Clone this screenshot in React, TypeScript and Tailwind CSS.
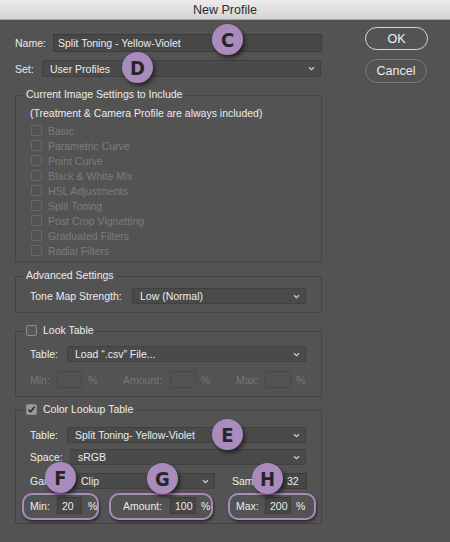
import type { ReactNode } from "react";

const Chevron = () => (
  <svg width="7" height="5" viewBox="0 0 7 5" className="shrink-0">
    <path d="M1 1.2 L3.5 3.6 L6 1.2" fill="none" stroke="#d0d0d0" strokeWidth="1.2" />
  </svg>
);

const Dropdown = ({ value, className = "" }: { value: string; className?: string }) => (
  <div
    className={`flex items-center justify-between h-[16px] bg-[#4a4a4a] border border-[#404040] rounded-[2px] pl-[7px] pr-[5px] text-[#ececec] ${className}`}
  >
    <span>{value}</span>
    <Chevron />
  </div>
);

const Box = ({ legend, children, className = "" }: { legend: ReactNode; children: ReactNode; className?: string }) => (
  <div className={`border border-[#444444] ${className}`}>
    <div className="-mt-[9px] ml-[7px] px-[3px] bg-[#535353] w-fit h-[14px] leading-[14px] flex items-center gap-[6px] text-[#ececec]">
      {legend}
    </div>
    {children}
  </div>
);

const CheckBox = ({ checked = false, disabled = false }: { checked?: boolean; disabled?: boolean }) => (
  <div
    className={`w-[11px] h-[11px] rounded-[2px] border flex items-center justify-center shrink-0 ${
      checked
        ? "bg-[#9a9a9a] border-[#8a8a8a]"
        : disabled
        ? "bg-[#535353] border-[#686868]"
        : "bg-[#585858] border-[#8e8e8e]"
    }`}
  >
    {checked && (
      <svg width="9" height="9" viewBox="0 0 9 9">
        <path d="M1.5 4.6 L3.6 6.8 L7.6 1.8" fill="none" stroke="#2b2b2b" strokeWidth="1.6" />
      </svg>
    )}
  </div>
);

const NumBox = ({ value = "", disabled = false, w = "w-[26px]" }: { value?: string; disabled?: boolean; w?: string }) => (
  <div
    className={`${w} h-[17px] border flex items-center pl-[4px] ${
      disabled ? "bg-[#535353] border-[#484848]" : "bg-[#464646] border-[#3c3c3c] text-[#ececec]"
    }`}
  >
    {value}
  </div>
);

const Marker = ({ letter, x, y }: { letter: string; x: number; y: number }) => (
  <div
    className="absolute w-[31px] h-[31px] rounded-full bg-[#a98bbd] flex items-center justify-center shadow-[2px_3px_4px_rgba(0,0,0,0.55)] text-[#262626] font-bold text-[20px] leading-none"
    style={{ left: x - 15, top: y - 15, fontFamily: '"DejaVu Sans Condensed", "DejaVu Sans", sans-serif' }}
  >
    {letter}
  </div>
);

const Ring = ({ x, w }: { x: number; w: number }) => (
  <div
    className="absolute top-[493px] h-[27px] rounded-[10px] border-2 border-[#a98bbd] shadow-[1px_2px_3px_rgba(0,0,0,0.5)]"
    style={{ left: x, width: w }}
  />
);

const includeItems = [
  "Basic",
  "Parametric Curve",
  "Point Curve",
  "Black & White Mix",
  "HSL Adjustments",
  "Split Toning",
  "Post Crop Vignetting",
  "Graduated Filters",
  "Radial Filters",
];

export default function App() {
  return (
    <div
      className="relative w-[450px] h-[542px] overflow-hidden bg-[#535353] text-[10.5px] leading-[14px] text-[#ececec]"
      style={{ fontFamily: '"Liberation Sans", Arial, sans-serif' }}
    >
      {/* title bar */}
      <div className="h-[20px] bg-gradient-to-b from-[#ececec] to-[#d4d4d4] border-b border-[#a9a9a9] flex items-center justify-center text-[12.5px] text-[#2e2e2e]">
        New Profile
      </div>

      <div className="flex">
        {/* left column */}
        <div className="pl-[15px] w-[322px] shrink-0">
          <div className="mt-[14px] h-[18px] flex items-center">
            <span className="w-[38px]">Name:</span>
            <div className="w-[269px] h-[18px] bg-[#474747] border border-[#3c3c3c] flex items-center pl-[4px]">
              Split Toning - Yellow-Violet
            </div>
          </div>
          <div className="mt-[8px] h-[17px] flex items-center">
            <span className="w-[27px]">Set:</span>
            <Dropdown value="User Profiles" className="w-[279px] h-[17px]" />
          </div>

          <Box legend="Current Image Settings to Include" className="mt-[18px] pb-[3px]">
            <div className="mt-[5px] pl-[14px]">(Treatment &amp; Camera Profile are always included)</div>
            <div className="mt-[3px] pl-[15px]">
              {includeItems.map((item) => (
                <div key={item} className="h-[15px] flex items-center gap-[6px] text-[#7c7c7c]">
                  <CheckBox disabled />
                  <span>{item}</span>
                </div>
              ))}
            </div>
          </Box>

          <Box legend="Advanced Settings" className="mt-[14px] pb-[8px]">
            <div className="mt-[6px] pl-[14px] flex items-center">
              <span className="w-[102px]">Tone Map Strength:</span>
              <Dropdown value="Low (Normal)" className="w-[174px]" />
            </div>
          </Box>

          <Box
            legend={
              <>
                <CheckBox />
                <span>Look Table</span>
              </>
            }
            className="mt-[18px] pb-[8px]"
          >
            <div className="mt-[9px] pl-[14px] flex items-center">
              <span className="w-[37px]">Table:</span>
              <Dropdown value={"Load \u201c.csv\u201d File..."} className="w-[239px]" />
            </div>
            <div className="mt-[9px] pl-[14px] flex items-center text-[#777777]">
              <div className="w-[93px] flex items-center">
                <span className="w-[27px]">Min:</span>
                <NumBox disabled w="w-[25px]" />
                <span className="pl-[6px]">%</span>
              </div>
              <div className="w-[113px] flex items-center">
                <span className="w-[47px]">Amount:</span>
                <NumBox disabled />
                <span className="pl-[5px]">%</span>
              </div>
              <div className="flex items-center">
                <span className="w-[29px]">Max:</span>
                <NumBox disabled />
                <span className="pl-[5px]">%</span>
              </div>
            </div>
          </Box>

          <Box
            legend={
              <>
                <CheckBox checked />
                <span>Color Lookup Table</span>
              </>
            }
            className="mt-[13px] pb-[9px]"
          >
            <div className="mt-[11px] pl-[14px] flex items-center">
              <span className="w-[37px]">Table:</span>
              <Dropdown value="Split Toning- Yellow-Violet" className="w-[239px]" />
            </div>
            <div className="mt-[6px] pl-[14px] flex items-center">
              <span className="w-[40px]">Space:</span>
              <Dropdown value="sRGB" className="w-[236px]" />
            </div>
            <div className="mt-[8px] pl-[14px] flex items-center">
              <span className="w-[43px]">Gamut:</span>
              <Dropdown value="Clip" className="w-[142px]" />
              <span className="ml-[17px] w-[50px]">Samples:</span>
              <div className="w-[25px] h-[16px] bg-[#464646] border border-[#3c3c3c] flex items-center pl-[4px]">32</div>
            </div>
            <div className="mt-[8px] pl-[14px] flex items-center">
              <div className="w-[93px] flex items-center">
                <span className="w-[27px]">Min:</span>
                <NumBox value="20" w="w-[25px]" />
                <span className="pl-[6px]">%</span>
              </div>
              <div className="w-[113px] flex items-center">
                <span className="w-[47px]">Amount:</span>
                <NumBox value="100" />
                <span className="pl-[5px]">%</span>
              </div>
              <div className="flex items-center">
                <span className="w-[29px]">Max:</span>
                <NumBox value="200" />
                <span className="pl-[5px]">%</span>
              </div>
            </div>
          </Box>
        </div>

        {/* right column */}
        <div className="ml-[43px] flex flex-col">
          <button className="mt-[7px] w-[63px] h-[23px] rounded-full border-[1.5px] border-[#d6d6d6] text-[12.5px] text-[#f2f2f2] flex items-center justify-center">
            OK
          </button>
          <button className="mt-[9px] w-[62px] h-[24px] rounded-full border border-[#7a7a7a] text-[12.5px] text-[#ececec] flex items-center justify-center">
            Cancel
          </button>
        </div>
      </div>

      {/* annotations */}
      <Ring x={22} w={77} />
      <Ring x={109} w={104} />
      <Ring x={228} w={88} />
      <Marker letter="C" x={227} y={39} />
      <Marker letter="D" x={137} y={67} />
      <Marker letter="E" x={227} y={434} />
      <Marker letter="F" x={60} y={477} />
      <Marker letter="G" x={162} y={478} />
      <Marker letter="H" x={267} y={478} />
    </div>
  );
}
